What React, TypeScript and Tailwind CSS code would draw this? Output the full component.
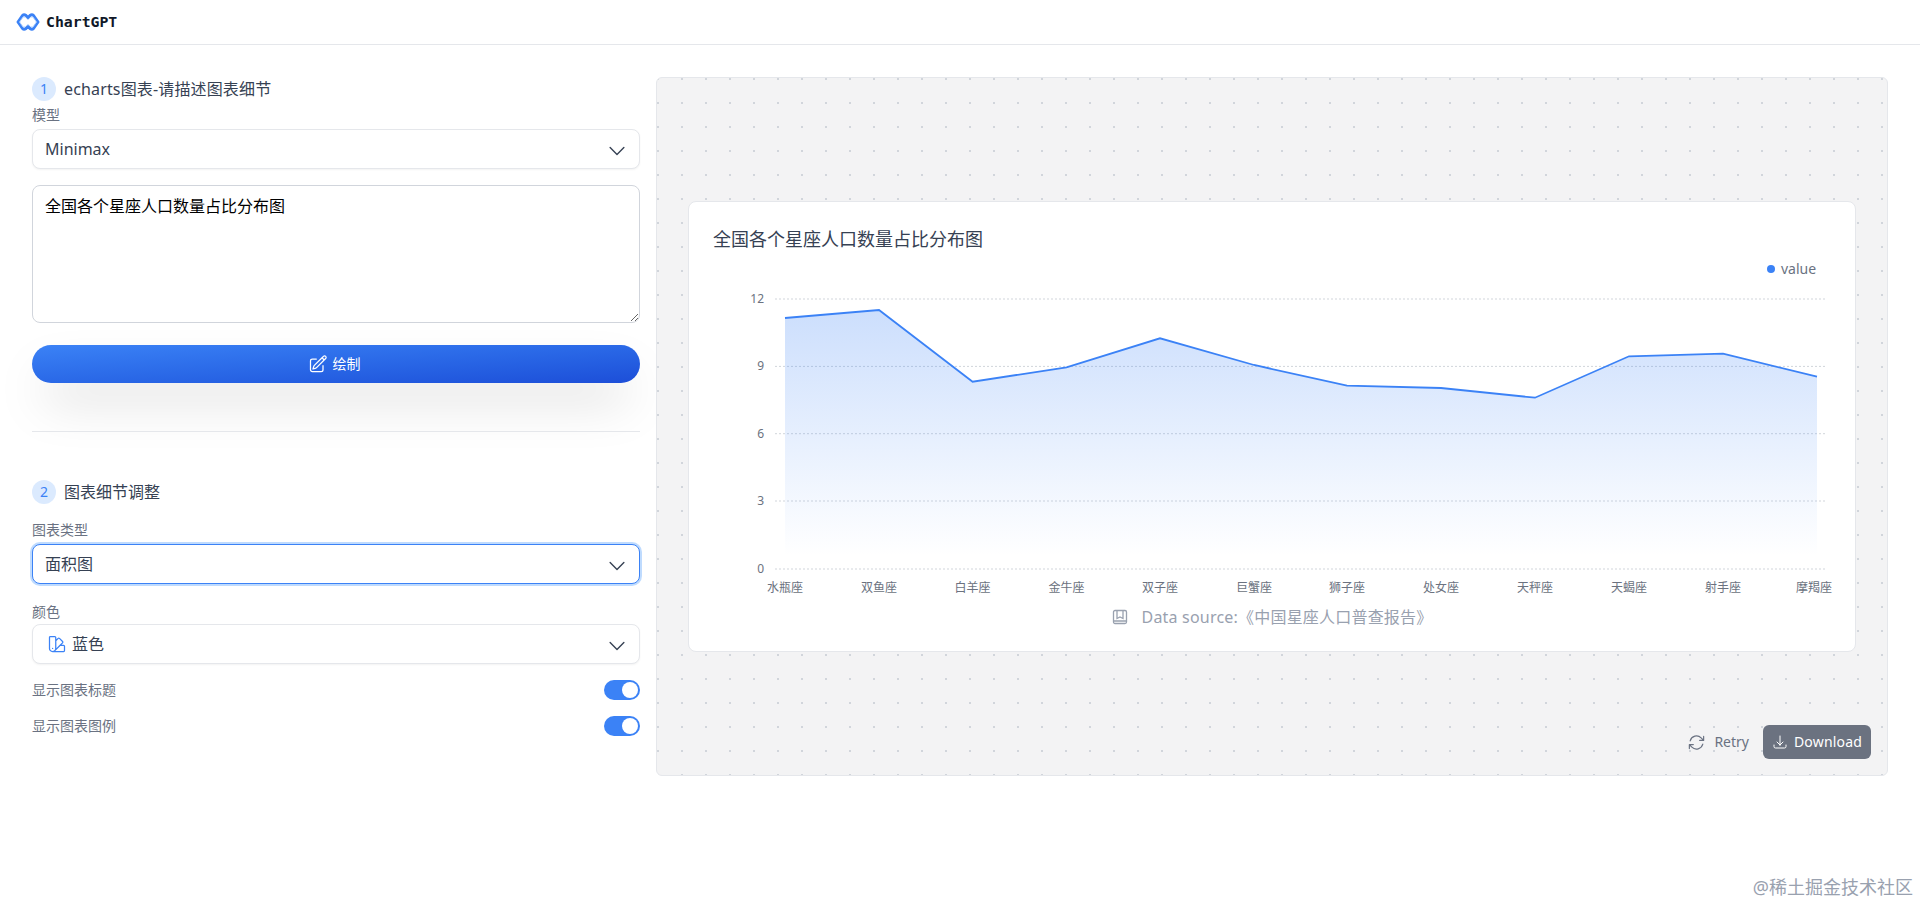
import React from 'react';
import { HiOutlinePencilSquare, HiOutlineSwatch, HiOutlineArrowPath, HiOutlineArrowDownTray, HiOutlineChevronDown } from 'react-icons/hi2';

const points = [
  [784, 318], [878, 310], [971.6, 381.7], [1065.5, 367.3], [1159, 338.3], [1253, 365],
  [1346, 385.7], [1440, 388], [1534, 397.7], [1628, 356.3], [1722, 353.7], [1816, 376.7],
];
const months = ['水瓶座', '双鱼座', '白羊座', '金牛座', '双子座', '巨蟹座', '狮子座', '处女座', '天秤座', '天蝎座', '射手座', '摩羯座'];
const ticks = [
  { label: '12', y: 299 },
  { label: '9', y: 366.4 },
  { label: '6', y: 433.7 },
  { label: '3', y: 501 },
  { label: '0', y: 569 },
];

// svg sits at card left/top offset so chart coords can stay in page pixels
const ox = 688;
const oy = 282;
const line = points.map(([x, y]) => `${x - ox},${y - oy}`).join(' ');
const area = `${784 - ox},${569 - oy} ${line} ${1816 - ox},${569 - oy}`;

const Badge = ({ n }: { n: number }) => (
  <span className="flex h-6 w-6 items-center justify-center rounded-full bg-[#dbeafe] text-sm text-[#3b82f6]">{n}</span>
);

const Select = ({ children, focused }: { children: React.ReactNode; focused?: boolean }) => (
  <div
    className={
      focused
        ? 'flex h-10 items-center justify-between rounded-lg border border-[#3b82f6] bg-white pl-3 pr-[11px] text-base text-gray-700 ring-2 ring-[#bfdbfe]'
        : 'flex h-10 items-center justify-between rounded-lg border border-gray-200 bg-white pl-3 pr-[11px] text-base text-gray-700 shadow-xs'
    }
  >
    {children}
    <HiOutlineChevronDown className="mt-1 text-gray-700" size={22} />
  </div>
);

const Toggle = () => (
  <div className="flex h-5 w-9 items-center justify-end rounded-full bg-[#3b82f6] pr-0.5">
    <div className="h-4 w-4 rounded-full bg-white" />
  </div>
);

export default function App() {
  return (
    <div className="relative min-h-[903px] bg-white font-['Noto_Sans','Noto_Sans_CJK_SC',sans-serif]">
      <header className="flex h-[45px] items-center gap-[6px] border-b border-gray-200 pl-4">
        <svg width="24" height="20" viewBox="0 0 24 20" fill="none">
          <path
            d="M2 10 L6.5 3.5 Q8 2 10 3.5 L12 5.5 L14 3.5 Q16 2 17.5 3.5 L22 10 L17.5 16.5 Q16 18 14 16.5 L12 14.5 L10 16.5 Q8 18 6.5 16.5 Z"
            stroke="#3b82f6"
            strokeWidth="3"
            strokeLinejoin="round"
          />
          <path
            d="M3.5 10 L7 5 L9.5 5.5 L12 8 L14.5 5.5 L17 5 L20.5 10 L17 15 L14.5 14.5 L12 12 L9.5 14.5 L7 15 Z"
            stroke="#bfdbfe"
            strokeWidth="0.8"
            strokeLinejoin="round"
          />
        </svg>
        <span className="font-['DejaVu_Sans_Mono',monospace] text-[14.8px] font-bold text-gray-900">ChartGPT</span>
      </header>

      <main className="flex items-start gap-4 px-8 pt-8">
        <section className="w-[608px] shrink-0">
          <div className="flex items-center gap-2 text-base text-gray-700">
            <Badge n={1} />
            <span className="tracking-[0.15px]">echarts图表-请描述图表细节</span>
          </div>
          <label className="mb-[2px] mt-[2px] block text-sm leading-[24px] text-gray-500">模型</label>
          <Select>Minimax</Select>
          <textarea
            readOnly
            value="全国各个星座人口数量占比分布图"
            className="mt-4 block h-[138px] w-full rounded-lg border border-gray-300 px-3 py-2 text-base text-black outline-none"
          />
          <button className="mt-[22px] flex h-[38px] w-full items-center justify-center gap-[5px] rounded-full bg-gradient-to-br from-[#3b82f6] to-[#1d4ed8] pr-1 text-sm text-white shadow-2xl">
            <HiOutlinePencilSquare size={20} />
            绘制
          </button>
          <div className="mt-12 border-t border-gray-200" />

          <div className="mt-12 flex items-center gap-2 text-base text-gray-700">
            <Badge n={2} />
            <span>图表细节调整</span>
          </div>
          <label className="mb-[2px] mt-[14px] block text-sm leading-[24px] text-gray-500">图表类型</label>
          <Select focused>面积图</Select>
          <label className="mt-4 block text-sm leading-[24px] text-gray-500">颜色</label>
          <Select>
            <span className="flex items-center gap-[5px] pl-[2px]">
              <HiOutlineSwatch className="text-[#3b82f6]" size={20} />
              蓝色
            </span>
          </Select>
          <div className="mt-4 flex h-5 items-center justify-between text-sm text-gray-500">
            显示图表标题
            <Toggle />
          </div>
          <div className="mt-4 flex h-5 items-center justify-between text-sm text-gray-500">
            显示图表图例
            <Toggle />
          </div>
        </section>

        <section className="relative flex h-[699px] w-[1232px] items-center rounded-md border border-gray-200 bg-[#f3f3f4] bg-[radial-gradient(circle_at_1px_1px,#d1d5db_1px,transparent_0)] bg-[length:24px_24px] px-[31px]">
          <div className="h-[451px] w-full rounded-lg border border-gray-200 bg-white">
            <h2 className="pl-6 pt-[23px] text-lg leading-[28px] text-gray-700">全国各个星座人口数量占比分布图</h2>
            <svg width="1166" height="323" className="mt-[29px] block">
              <defs>
                <linearGradient id="areaFill" gradientUnits="userSpaceOnUse" x1="0" y1={310 - oy} x2="0" y2={556 - oy}>
                  <stop offset="0" stopColor="#3b82f6" stopOpacity="0.26" />
                  <stop offset="1" stopColor="#3b82f6" stopOpacity="0" />
                </linearGradient>
              </defs>
              {ticks.map((t) => (
                <g key={t.label}>
                  <line x1={774 - ox} x2={1826 - ox} y1={t.y - oy} y2={t.y - oy} stroke="#d1d5db" strokeDasharray="2 2" />
                  <text x={763 - ox} y={t.y - oy + 4} textAnchor="end" fontSize="12" fill="#6b7280">{t.label}</text>
                </g>
              ))}
              <polygon points={area} fill="url(#areaFill)" />
              <polyline points={line} fill="none" stroke="#3b82f6" strokeWidth="1.8" />
              {months.map((m, i) => (
                <text key={m} x={(i === 11 ? 1813 : points[i][0]) - ox} y={592 - oy} textAnchor="middle" fontSize="12" fill="#6b7280">{m}</text>
              ))}
            </svg>
            <div className="flex items-center justify-center gap-[14px] text-base leading-[24px] tracking-[0.2px] text-gray-400">
              <svg width="16" height="16" viewBox="0 0 16 16" fill="none" stroke="currentColor" strokeWidth="1.3">
                <rect x="1.5" y="1.5" width="13" height="13" rx="1.5" />
                <path d="M5 2v7.5l3-1.5 3 1.5V2M1.5 12h13" />
              </svg>
              <span>Data source:《中国星座人口普查报告》</span>
            </div>
          </div>

          {/* legend lies over the chart's top right corner */}
          <div className="absolute left-[1110px] top-[181px] flex items-center gap-[6px] text-sm text-gray-500">
            <span className="h-2 w-2 rounded-full bg-[#3b82f6]" />
            value
          </div>

          <div className="absolute bottom-[16px] right-[16px] flex items-center gap-[14px] text-sm">
            <button className="flex items-center gap-2 text-gray-500">
              <HiOutlineArrowPath size={19} />
              Retry
            </button>
            <button className="flex h-[34px] w-[108px] items-center justify-center gap-[6px] rounded-md bg-[#6b7280] tracking-[0.2px] text-white">
              <HiOutlineArrowDownTray size={16} />
              Download
            </button>
          </div>
        </section>
      </main>

      <div className="absolute right-[7px] top-[875px] text-lg leading-[24px] text-gray-400">@稀土掘金技术社区</div>
    </div>
  );
}
